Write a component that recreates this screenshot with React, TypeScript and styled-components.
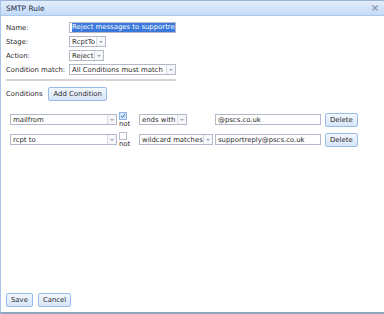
import styled, { createGlobalStyle } from 'styled-components';

const GlobalStyle = createGlobalStyle`
  html, body {
    margin: 0;
    padding: 0;
    background: #ffffff;
  }
  body {
    font-family: 'DejaVu Sans', Verdana, sans-serif;
    font-size: 6.9px;
    color: #2a2a2a;
  }
`;

const WindowBlock = styled.div`
  width: 384px;
  height: 314px;
  box-sizing: border-box;
  border-left: 1px solid #a9c4e8;
  border-bottom: 2px solid #8ea6c2;
  display: flex;
  flex-direction: column;
  background: #ffffff;
`;

const TitleBar = styled.div`
  height: 16px;
  box-sizing: border-box;
  border-top: 1px solid #9bb5d8;
  border-bottom: 1px solid #a9c7ef;
  background: linear-gradient(#e3edfb, #c4dbf7);
  padding: 0 6px 0 5px;
  display: flex;
  justify-content: space-between;
  align-items: center;
`;

const TitleText = styled.span`
  font-size: 7.4px;
  color: #1f2f4a;
`;

const CloseIcon = styled.svg`
  width: 6px;
  height: 6px;
  margin-top: -1px;
`;

const Body = styled.div`
  flex: 1;
  padding: 6px 5px 5px 5px;
  display: flex;
  flex-direction: column;
`;

const FormRow = styled.div`
  display: flex;
  align-items: center;
  height: 11px;
  margin-bottom: 3px;
`;

const Label = styled.span`
  width: 63px;
  flex-shrink: 0;
`;

const TextBox = styled.div<{ $width: number }>`
  width: ${(p) => p.$width}px;
  height: 11px;
  box-sizing: border-box;
  border: 1px solid #b5b8c8;
  background: #ffffff;
  display: flex;
  align-items: center;
  padding-left: 2px;
  overflow: hidden;
  white-space: nowrap;
`;

const Selected = styled.span`
  background: #3a78dc;
  color: #ffffff;
  line-height: 9px;
`;

const SelectBox = styled.div<{ $width: number }>`
  width: ${(p) => p.$width}px;
  height: 11px;
  box-sizing: border-box;
  border: 1px solid #b5b8c8;
  background: #ffffff;
  display: flex;
  align-items: stretch;
  flex-shrink: 0;
`;

const SelectText = styled.span`
  flex: 1;
  padding-left: 2px;
  display: flex;
  align-items: center;
  white-space: nowrap;
  overflow: hidden;
`;

const Trigger = styled.span`
  width: 8px;
  border-left: 1px solid #d8dbe3;
  background: #f6f7f9;
  display: flex;
  align-items: center;
  justify-content: center;

  &::after {
    content: '';
    border-left: 2px solid transparent;
    border-right: 2px solid transparent;
    border-top: 2px solid #9aa6b8;
  }
`;

const Divider = styled.div`
  width: 170px;
  height: 2px;
  background: #d4d4d4;
  margin-top: 1px;
`;

const ConditionsHeader = styled.div`
  display: flex;
  align-items: center;
  gap: 6px;
  margin-top: 6px;
`;

const Button = styled.button`
  height: 14px;
  box-sizing: border-box;
  padding: 0 4px;
  border: 1px solid #99bbe8;
  border-radius: 2px;
  background: linear-gradient(#f3f7fd, #d6e5f8);
  font-family: 'DejaVu Sans', Verdana, sans-serif;
  font-size: 6.9px;
  color: #2a2a2a;
  line-height: 12px;
`;

const ConditionList = styled.div`
  margin-top: 11px;
  padding-left: 4px;
  display: flex;
  flex-direction: column;
  gap: 3px;
`;

const ConditionRow = styled.div`
  display: flex;
  align-items: flex-start;
  height: 17px;
`;

const Cell = styled.div<{ $width: number }>`
  width: ${(p) => p.$width}px;
  flex-shrink: 0;
  padding-top: 2px;
`;

const NotColumn = styled.div`
  width: 20px;
  margin-left: 2px;
  flex-shrink: 0;
  display: flex;
  flex-direction: column;
  line-height: 8px;
`;

const CheckBox = styled.span<{ $checked?: boolean }>`
  width: 8px;
  height: 8px;
  box-sizing: border-box;
  border: 1px solid ${(p) => (p.$checked ? '#8eb3e3' : '#b9bfca')};
  background: ${(p) => (p.$checked ? '#d4e5f9' : '#ffffff')};
  display: flex;
  align-items: center;
  justify-content: center;
`;

const DeleteButton = styled(Button)`
  margin-left: 4px;
  margin-top: 1px;
`;

const Footer = styled.div`
  margin-top: auto;
  display: flex;
  gap: 5px;
`;

type Condition = {
  field: string;
  not: boolean;
  op: string;
  opWidth: number;
  value: string;
};

const conditions: Condition[] = [
  { field: 'mailfrom', not: true, op: 'ends with', opWidth: 48, value: '@pscs.co.uk' },
  { field: 'rcpt to', not: false, op: 'wildcard matches', opWidth: 74, value: 'supportreply@pscs.co.uk' },
];

const Select = ({ width, value }: { width: number; value: string }) => (
  <SelectBox $width={width}>
    <SelectText>{value}</SelectText>
    <Trigger />
  </SelectBox>
);

const App = () => {
  return (
    <>
      <GlobalStyle />
      <WindowBlock>
        <TitleBar>
          <TitleText>SMTP Rule</TitleText>
          <CloseIcon viewBox="0 0 6 6">
            <path d="M0.5 0.5 L5.5 5.5 M5.5 0.5 L0.5 5.5" stroke="#8d99aa" strokeWidth="1.3" />
          </CloseIcon>
        </TitleBar>

        <Body>
          <FormRow>
            <Label>Name:</Label>
            <TextBox $width={107}>
              <Selected>Reject messages to supportreply@pscs.co.uk</Selected>
            </TextBox>
          </FormRow>
          <FormRow>
            <Label>Stage:</Label>
            <Select width={37} value="RcptTo" />
          </FormRow>
          <FormRow>
            <Label>Action:</Label>
            <Select width={35} value="Reject" />
          </FormRow>
          <FormRow>
            <Label>Condition match:</Label>
            <Select width={107} value="All Conditions must match" />
          </FormRow>

          <Divider />

          <ConditionsHeader>
            <span>Conditions</span>
            <Button>Add Condition</Button>
          </ConditionsHeader>

          <ConditionList>
            {conditions.map((c) => (
              <ConditionRow key={c.field}>
                <Cell $width={107}>
                  <Select width={107} value={c.field} />
                </Cell>
                <NotColumn>
                  <CheckBox $checked={c.not}>
                    {c.not && (
                      <svg width="6" height="6" viewBox="0 0 6 6">
                        <path d="M1 3 L2.5 4.5 L5 1" stroke="#3d6fb8" strokeWidth="1" fill="none" />
                      </svg>
                    )}
                  </CheckBox>
                  <span>not</span>
                </NotColumn>
                <Cell $width={76}>
                  <Select width={c.opWidth} value={c.op} />
                </Cell>
                <Cell $width={106}>
                  <TextBox $width={106}>{c.value}</TextBox>
                </Cell>
                <DeleteButton>Delete</DeleteButton>
              </ConditionRow>
            ))}
          </ConditionList>

          <Footer>
            <Button>Save</Button>
            <Button>Cancel</Button>
          </Footer>
        </Body>
      </WindowBlock>
    </>
  );
};

export default App;
